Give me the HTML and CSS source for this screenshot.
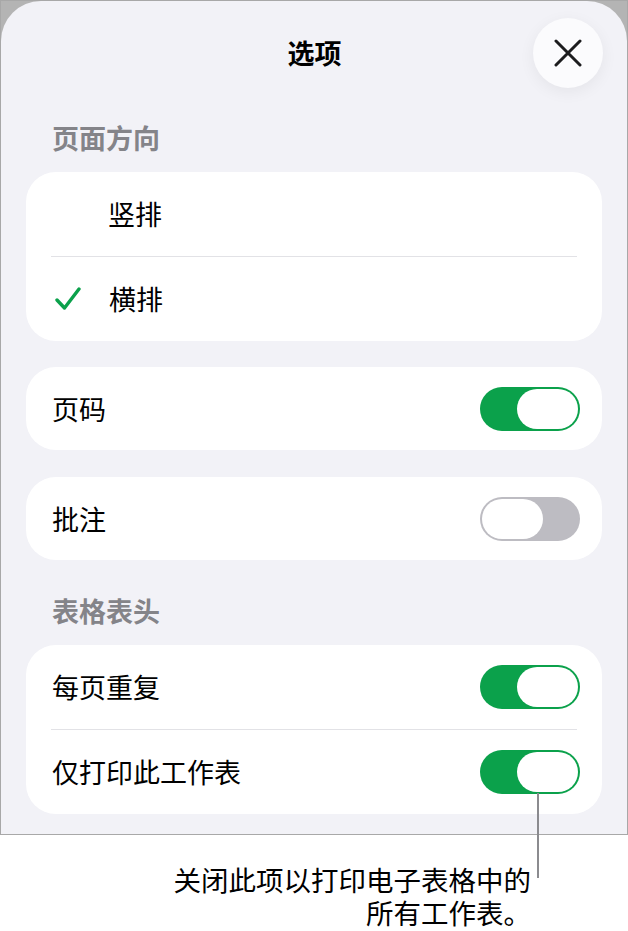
FILE: index.html
```html
<!DOCTYPE html>
<html lang="zh-CN">
<head>
    <meta charset="UTF-8">
    <meta name="viewport" content="width=device-width, initial-scale=1.0">
    <title>选项</title>
    <link rel="stylesheet" href="styles.css">
</head>
<body>
    <div class="page">
        <div class="frame">
            <div class="sheet">
                <div class="header">
                    <span></span>
                    <h1>选项</h1>
                    <button class="close-btn" aria-label="关闭">
                        <svg width="28" height="28" viewBox="0 0 28 28">
                            <path d="M2 2 L26 26 M26 2 L2 26" stroke="#1c1c1e" stroke-width="3" stroke-linecap="round"/>
                        </svg>
                    </button>
                </div>

                <div class="section-title first">页面方向</div>
                <div class="card">
                    <div class="row choice">
                        <span class="check"></span>
                        <span class="label">竖排</span>
                    </div>
                    <div class="row choice">
                        <span class="check">
                            <svg width="26" height="24" viewBox="0 0 26 24">
                                <path d="M2 13 L9.5 21 L24 2" fill="none" stroke="#0ba14b" stroke-width="3.4" stroke-linecap="round" stroke-linejoin="round"/>
                            </svg>
                        </span>
                        <span class="label">横排</span>
                    </div>
                </div>

                <div class="card gap">
                    <div class="row">
                        <span class="label">页码</span>
                        <span class="toggle on"><span class="knob"></span></span>
                    </div>
                </div>

                <div class="card gap">
                    <div class="row">
                        <span class="label">批注</span>
                        <span class="toggle"><span class="knob"></span></span>
                    </div>
                </div>

                <div class="section-title">表格表头</div>
                <div class="card">
                    <div class="row">
                        <span class="label">每页重复</span>
                        <span class="toggle on"><span class="knob"></span></span>
                    </div>
                    <div class="row">
                        <span class="label">仅打印此工作表</span>
                        <span class="toggle on"><span class="knob"></span></span>
                    </div>
                </div>
            </div>
        </div>

        <div class="callout">
            <div>关闭此项以打印电子表格中的</div>
            <div>所有工作表。</div>
        </div>
        <div class="callout-line"></div>
    </div>
</body>
</html>
```

FILE: styles.css
```css
* {
    margin: 0;
    padding: 0;
    box-sizing: border-box;
}

body {
    font-family: "Noto Sans CJK SC", "Noto Sans", sans-serif;
    background: #ffffff;
    color: #000;
}

.page {
    position: relative;
    width: 628px;
    height: 931px;
}

.frame {
    height: 835px;
    border: 1px solid #a8a8a8;
    background: #b4b4b4;
}

.sheet {
    height: 100%;
    background: #f2f2f7;
    border-radius: 40px 40px 0 0;
    padding: 0 25px;
}

.header {
    display: grid;
    grid-template-columns: 1fr auto 1fr;
    align-items: center;
    padding-top: 17px;
    margin-right: -1px;
}

.header h1 {
    font-size: 27px;
    font-weight: 700;
    line-height: 70px;
}

.close-btn {
    justify-self: end;
    width: 70px;
    height: 70px;
    border: none;
    border-radius: 50%;
    background: #fbfbfd;
    box-shadow: 0 4px 16px rgba(0, 0, 0, 0.06);
    display: flex;
    align-items: center;
    justify-content: center;
}

.section-title {
    font-size: 27px;
    font-weight: 700;
    color: #848489;
    line-height: 32px;
    padding-left: 26px;
    margin: 35px 0 18px;
}

.section-title.first {
    margin-top: 34px;
    margin-bottom: 18px;
}

.card {
    background: #ffffff;
    border-radius: 30px;
}

.card.gap {
    margin-top: 26px;
}

.card.gap + .card.gap {
    margin-top: 27px;
}

.row {
    height: 83px;
    display: flex;
    align-items: center;
    justify-content: space-between;
    padding: 0 22px 0 26px;
    font-size: 27px;
}

.row + .row {
    height: 85px;
    border-top: 1px solid #e2e2e6;
    margin: 0 25px;
    padding: 0 0 0 1px;
}

.card .row:first-child:not(:last-child) {
    height: 84px;
}

.row.choice {
    justify-content: flex-start;
}

.check {
    width: 56px;
    height: 24px;
    display: flex;
    align-items: center;
}

.row + .row.choice .check {
    margin-left: -23px;
    width: 80px;
    padding-left: 26px;
}

.label {
    line-height: 32px;
}

.toggle {
    width: 100px;
    height: 44px;
    border-radius: 22px;
    background: #bdbcc2;
    padding: 2px;
    display: flex;
}

.row + .row .toggle {
    margin-right: -3px;
}

.toggle.on {
    background: #0ba14b;
    justify-content: flex-end;
}

.knob {
    width: 61px;
    height: 40px;
    border-radius: 20px;
    background: #ffffff;
}

.callout {
    margin-top: 28px;
    padding-right: 97px;
    text-align: right;
    font-size: 27.5px;
    line-height: 33px;
}

.callout-line {
    position: absolute;
    left: 537px;
    top: 793px;
    width: 2px;
    height: 85px;
    background: #8b8b8f;
}
```
